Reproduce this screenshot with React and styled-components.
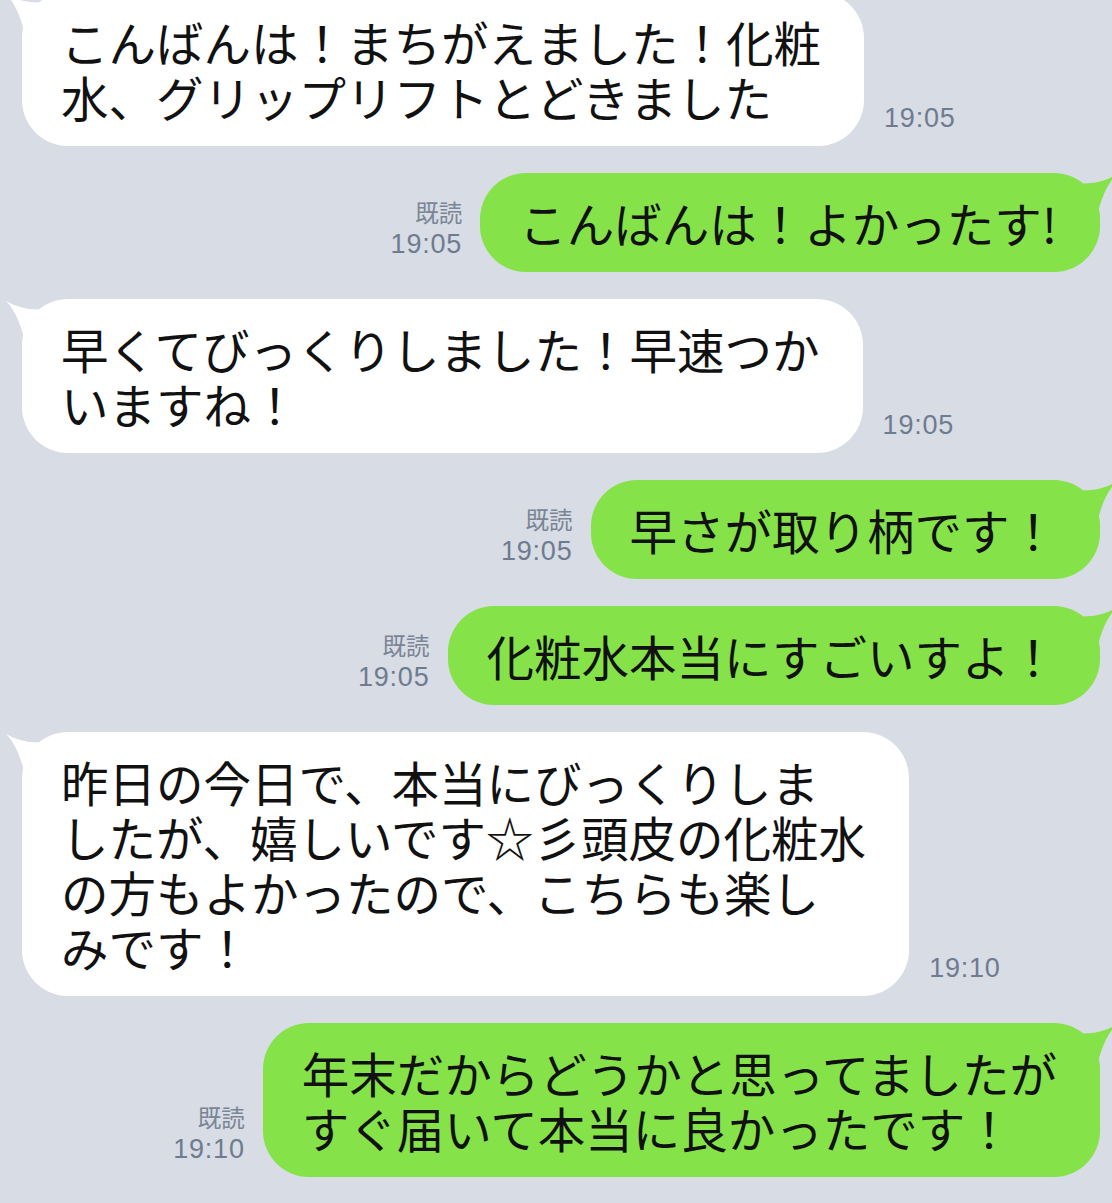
import React from "react";
import styled, { createGlobalStyle } from "styled-components";

const GlobalStyle = createGlobalStyle`
  html, body {
    margin: 0;
    padding: 0;
    background: #d7dce5;
  }
  body {
    font-family: "Noto Sans CJK JP", "Noto Sans", sans-serif;
  }
`;

const Screen = styled.div`
  width: 1112px;
  height: 1203px;
  overflow: hidden;
  background: #d7dce5;
  box-sizing: border-box;
  padding: 0 12px 0 22px;
`;

const List = styled.div`
  display: flex;
  flex-direction: column;
  gap: 27px;
  margin-top: -8px;
`;

const Row = styled.div`
  display: flex;
  align-items: flex-end;
  justify-content: ${(p) => (p.$mine ? "flex-end" : "flex-start")};
  gap: ${(p) => (p.$mine ? "18px" : "20px")};
`;

const Bubble = styled.div`
  position: relative;
  background: ${(p) => (p.$mine ? "#85e249" : "#ffffff")};
  color: #111;
  border-radius: 46px;
  padding: 22px 43px 22px 39px;
  font-size: 47.5px;
  line-height: 55px;
  white-space: pre;
`;

const Tail = styled.svg`
  position: absolute;
  top: 0;
  width: 60px;
  height: 50px;
  ${(p) =>
    p.$mine
      ? "right: -20px; transform: scaleX(-1);"
      : "left: -20px;"}
`;

const Meta = styled.div`
  display: flex;
  flex-direction: column;
  align-items: flex-end;
  margin-bottom: 12px;
`;

const Read = styled.span`
  font-family: "Noto Sans CJK JP", sans-serif;
  font-size: 23.5px;
  line-height: 32px;
  color: #7b8595;
`;

const Time = styled.span`
  font-family: "Liberation Sans", Arial, sans-serif;
  font-size: 27px;
  line-height: 32px;
  letter-spacing: 0.8px;
  color: #6f7b8e;
`;

const BubbleTail = ({ mine }) => (
  <Tail $mine={mine} viewBox="0 0 60 50">
    <path
      d="M24 50 C21 30 14 12 4 2 C15 8 27 12 46 10 L46 50 Z"
      fill={mine ? "#85e249" : "#ffffff"}
    />
  </Tail>
);

const messages = [
  { mine: false, time: "19:05", text: "こんばんは！まちがえました！化粧\n水、グリップリフトとどきました" },
  { mine: true, time: "19:05", text: "こんばんは！よかったす!" },
  { mine: false, time: "19:05", text: "早くてびっくりしました！早速つか\nいますね！" },
  { mine: true, time: "19:05", text: "早さが取り柄です！" },
  { mine: true, time: "19:05", text: "化粧水本当にすごいすよ！" },
  {
    mine: false,
    time: "19:10",
    text: "昨日の今日で、本当にびっくりしま\nしたが、嬉しいです☆彡頭皮の化粧水\nの方もよかったので、こちらも楽し\nみです！",
  },
  { mine: true, time: "19:10", text: "年末だからどうかと思ってましたが\nすぐ届いて本当に良かったです！" },
];

const Message = ({ mine, time, text }) =>
  mine ? (
    <Row $mine>
      <Meta>
        <Read>既読</Read>
        <Time>{time}</Time>
      </Meta>
      <Bubble $mine>
        <BubbleTail mine />
        {text}
      </Bubble>
    </Row>
  ) : (
    <Row>
      <Bubble>
        <BubbleTail />
        {text}
      </Bubble>
      <Meta>
        <Time>{time}</Time>
      </Meta>
    </Row>
  );

export default function App() {
  return (
    <>
      <GlobalStyle />
      <Screen>
        <List>
          {messages.map((m, i) => (
            <Message key={i} {...m} />
          ))}
        </List>
      </Screen>
    </>
  );
}
